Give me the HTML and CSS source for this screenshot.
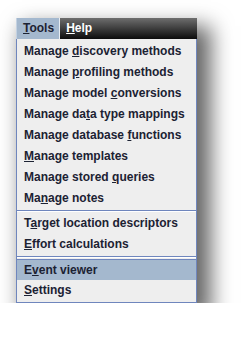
FILE: index.html
```html
<!DOCTYPE html>
<html lang="en">
<head>
  <meta charset="UTF-8">
  <title>Tools menu</title>
  <link rel="stylesheet" href="styles.css">
</head>
<body>

<div class="menu-wrap">
  <div class="menubar">
    <div class="menubar-item active"><u>T</u>ools</div>
    <div class="menubar-item"><u>H</u>elp</div>
  </div>

  <div class="popup">
    <div class="item">Manage <u>d</u>iscovery methods</div>
    <div class="item">Manage <u>p</u>rofiling methods</div>
    <div class="item">Manage model <u>c</u>onversions</div>
    <div class="item">Manage da<u>t</u>a type mappings</div>
    <div class="item">Manage database <u>f</u>unctions</div>
    <div class="item"><u>M</u>anage templates</div>
    <div class="item">Manage stored <u>q</u>ueries</div>
    <div class="item">Ma<u>n</u>age notes</div>
    <div class="separator"></div>
    <div class="item">T<u>a</u>rget location descriptors</div>
    <div class="item"><u>E</u>ffort calculations</div>
    <div class="separator"></div>
    <div class="item selected">E<u>v</u>ent viewer</div>
    <div class="item"><u>S</u>ettings</div>
  </div>
</div>

</body>
</html>
```

FILE: styles.css
```css
body {
  margin: 0;
  padding: 0;
  background: #fff;
  font-family: "Liberation Sans", Arial, sans-serif;
  font-size: 12px;
  font-weight: bold;
  color: #1c2233;
}

.menu-wrap {
  width: 181px;
  margin: 18px 0 0 16px;
  box-shadow: 10px 12px 20px 4px rgba(0, 0, 0, 0.6);
}

.menubar {
  display: flex;
  height: 21px;
  background: linear-gradient(#6e6e6e, #0c0c0c);
}

.menubar-item {
  line-height: 21px;
  padding: 0 5px 0 6px;
  color: #fff;
}

.menubar-item.active {
  background: #a4b8ce;
  color: #1c2233;
  border-left: 1px solid #c4d2e2;
  border-right: 1px solid #e6ecf2;
}

.popup {
  background: #eeeeee;
  border: 1px solid #6f86bd;
  border-top: none;
  padding-top: 2px;
  padding-bottom: 1px;
}

.item {
  height: 21px;
  line-height: 21px;
  padding-left: 7px;
  white-space: nowrap;
}

.item.selected {
  background: #a4b8ce;
  border-top: 1px solid #6f86bd;
  height: 20px;
  line-height: 20px;
}

.separator {
  height: 1px;
  border-top: 1px solid #6f86bd;
  background: #fff;
  margin: 1px 0;
}

u {
  text-decoration-thickness: 1px;
  text-underline-offset: 1px;
}
```
